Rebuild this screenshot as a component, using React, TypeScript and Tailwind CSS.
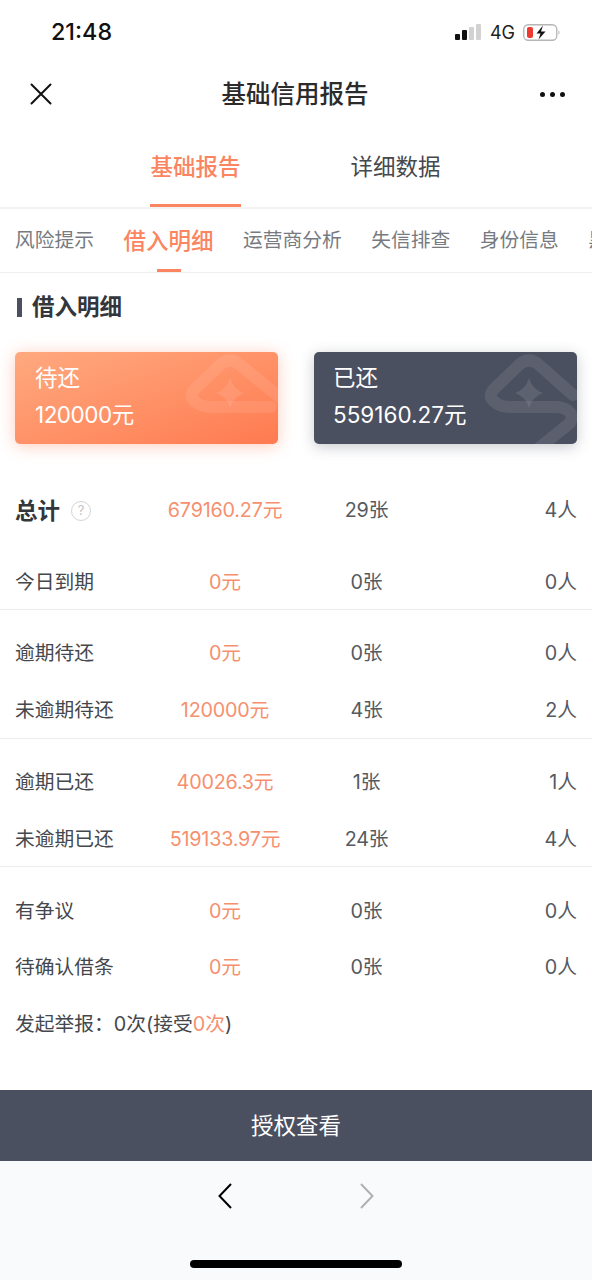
import React from "react";

const FONT = "font-['Inter','Noto_Sans_CJK_SC',sans-serif]";

interface Row {
  label: string;
  amount: string;
  cards: string;
  people: string;
}

const groups: { cls: string; rows: Row[] }[] = [
  {
    cls: "pt-[15px]",
    rows: [
      { label: "逾期待还", amount: "0元", cards: "0张", people: "0人" },
      { label: "未逾期待还", amount: "120000元", cards: "4张", people: "2人" },
    ],
  },
  {
    cls: "h-[127.6px] pt-[14px]",
    rows: [
      { label: "逾期已还", amount: "40026.3元", cards: "1张", people: "1人" },
      { label: "未逾期已还", amount: "519133.97元", cards: "24张", people: "4人" },
    ],
  },
];

const subTabs = ["风险提示", "借入明细", "运营商分析", "失信排查", "身份信息", "黑名单"];

function Watermark({ dark }: { dark?: boolean }) {
  return (
    <svg
      className="absolute inset-0 h-full w-full"
      viewBox="0 0 263 92"
      fill="none"
      stroke="white"
      strokeOpacity={dark ? 0.09 : 0.09}
      strokeWidth="12"
      strokeLinecap="round"
      strokeLinejoin="round"
    >
      <path
        d={
          dark
            ? "M259 43 L224 12 Q215 5 206 12 L180 37 Q173 45 181 50 Q186 55 196 55 H244 Q262 58 256 71 L220 100"
            : "M268 48 L224 12 Q215 5 206 12 L180 37 Q173 45 181 50 Q186 55 196 55 H256"
        }
      />
      <path
        d="M215 26 Q218 37 229 41 Q218 45 215 56 Q212 45 201 41 Q212 37 215 26 Z"
        fill="white"
        fillOpacity={0.1}
        stroke="none"
      />
    </svg>
  );
}

function DataRow({ row }: { row: Row }) {
  return (
    <div className="grid h-[56.8px] grid-cols-[120px_180px_104px_1fr] items-center px-[15px] pt-[2px] text-[19.75px] tracking-[-0.2px] text-[#555a60]">
      <div className="tracking-normal text-[#44474c]">{row.label}</div>
      <div className="text-center text-[#f6906f]">{row.amount}</div>
      <div className="pr-[1px] text-center">{row.cards}</div>
      <div className="text-right tracking-normal">{row.people}</div>
    </div>
  );
}

export default function App() {
  return (
    <div className={`flex h-[1280px] w-[592px] flex-col overflow-hidden bg-white ${FONT}`}>
      {/* status bar */}
      <div className="flex h-[64px] shrink-0 items-center justify-between pl-[51px] pr-[32px]">
        <span className="text-[23.3px] font-medium text-[#111]">21:48</span>
        <div className="flex items-center gap-[8px]">
          <svg width="27" height="16" viewBox="0 0 27 16">
            <rect x="0" y="10" width="5" height="6" rx="1" fill="#111" />
            <rect x="7" y="6" width="5" height="10" rx="1" fill="#111" />
            <rect x="14" y="3" width="5" height="13" rx="1" fill="#d2d2d2" />
            <rect x="21" y="0" width="5" height="16" rx="1" fill="#d2d2d2" />
          </svg>
          <span className="text-[18px] font-normal text-[#222]">4G</span>
          <svg width="37" height="17" viewBox="0 0 37 17">
            <rect x="0.75" y="0.75" width="33" height="15.5" rx="4.5" fill="none" stroke="#b5b5b5" strokeWidth="1.3" />
            <rect x="4" y="3" width="6" height="11" rx="2" fill="#ee3a30" />
            <path d="M35.5 6 Q37.5 8.5 35.5 11 Z" fill="#b5b5b5" />
            <path d="M20 1.5 L13.5 9.5 H17.5 L15.5 15.5 L22.5 7.5 H18 Z" fill="#111" />
          </svg>
        </div>
      </div>

      {/* nav */}
      <div className="flex h-[60px] shrink-0 items-center justify-between pl-[30px] pr-[27px]">
        <svg width="22" height="22" viewBox="0 0 22 22" stroke="#111" strokeWidth="2" strokeLinecap="round">
          <path d="M1.5 1.5 L20.5 20.5 M20.5 1.5 L1.5 20.5" />
        </svg>
        <span className="mr-[2px] text-[24.5px] font-medium text-[#2b2b2b]">基础信用报告</span>
        <div className="flex gap-[5px]">
          <span className="h-[5px] w-[5px] rounded-full bg-[#111]" />
          <span className="h-[5px] w-[5px] rounded-full bg-[#111]" />
          <span className="h-[5px] w-[5px] rounded-full bg-[#111]" />
        </div>
      </div>

      {/* main tabs */}
      <div className="flex h-[85px] shrink-0 justify-center gap-[110px] border-b-[2px] border-[#f2f2f2] pr-[1px] text-[22.5px]">
        <div className="flex items-center border-b-[3px] border-[#fb8560] pt-[5px] font-medium text-[#fb8560]">基础报告</div>
        <div className="flex items-center border-b-[3px] border-transparent pt-[5px] text-[#45484d]">详细数据</div>
      </div>

      {/* sub tabs */}
      <div className="flex h-[64px] shrink-0 items-center gap-[29.5px] overflow-hidden whitespace-nowrap border-b border-[#f0f0f0] pl-[15px]">
        {subTabs.map((t) =>
          t === "借入明细" ? (
            <div key={t} className="relative flex h-full items-center text-[22.5px] font-medium text-[#fb8560]">
              {t}
              <span className="absolute bottom-0 left-[33px] h-[3px] w-[24px] bg-[#fb8560]" />
            </div>
          ) : (
            <div key={t} className="text-[19.75px] text-[#777a7f]">
              {t}
            </div>
          )
        )}
      </div>

      {/* section title */}
      <div className="flex h-[68px] shrink-0 items-center gap-[10px] pl-[17px]">
        <span className="h-[19px] w-[5px] bg-[#4b5060]" />
        <span className="text-[22.5px] font-semibold text-[#33363a]">借入明细</span>
      </div>

      {/* summary cards */}
      <div className="flex shrink-0 justify-between px-[15px] pt-[11px]">
        <div className="relative h-[92px] w-[263px] overflow-hidden rounded-[5px] bg-gradient-to-br from-[#ffa97f] to-[#ff7a50] pl-[20px] pt-[9px] text-white shadow-[0_2px_16px_rgba(255,130,90,0.4)]">
          <Watermark />
          <div className="relative text-[22.5px] leading-[34px]">待还</div>
          <div className="relative mt-[3px] text-[22.5px] leading-[34px] tracking-[-0.5px]">120000元</div>
        </div>
        <div className="relative h-[92px] w-[263px] overflow-hidden rounded-[5px] bg-[#4b5060] pl-[19px] pt-[9px] text-white shadow-[0_3px_14px_rgba(75,80,96,0.3)]">
          <Watermark dark />
          <div className="relative text-[22.5px] leading-[34px]">已还</div>
          <div className="relative mt-[3px] text-[22.5px] leading-[34px]">559160.27元</div>
        </div>
      </div>

      {/* totals */}
      <div className="mt-[37px] grid h-[57px] shrink-0 grid-cols-[120px_180px_104px_1fr] items-center px-[15px] pt-[2px] text-[19.75px] tracking-[-0.2px] text-[#555a60]">
        <div className="flex items-center gap-[11px] text-[22.5px] font-semibold tracking-normal text-[#33363a]">
          总计
          <span className="flex h-[20px] w-[20px] items-center justify-center rounded-full border border-[#d4d4d4] text-[13px] font-normal text-[#c4c4c4]">?</span>
        </div>
        <div className="text-center text-[#f6906f]">679160.27元</div>
        <div className="pr-[1px] text-center">29张</div>
        <div className="text-right tracking-normal">4人</div>
      </div>

      <div className="mt-[15px] h-[56.8px] shrink-0 border-b border-[#ececec]">
        <DataRow row={{ label: "今日到期", amount: "0元", cards: "0张", people: "0人" }} />
      </div>

      {groups.map((g) => (
        <div key={g.rows[0].label} className={`shrink-0 border-b border-[#ececec] ${g.cls}`}>
          {g.rows.map((r) => (
            <DataRow key={r.label} row={r} />
          ))}
        </div>
      ))}

      <div className="shrink-0 pt-[15px]">
        <DataRow row={{ label: "有争议", amount: "0元", cards: "0张", people: "0人" }} />
        <DataRow row={{ label: "待确认借条", amount: "0元", cards: "0张", people: "0人" }} />
      </div>

      <div className="flex h-[57px] shrink-0 items-center pl-[15px] pt-[2px] text-[19.75px] text-[#44474c]">
        发起举报：0次(接受<span className="text-[#f6906f]">0次</span>)
      </div>

      <div className="flex-1" />

      {/* action button */}
      <div className="flex h-[71px] shrink-0 items-center justify-center bg-[#4b5060] text-[22.5px] text-white">授权查看</div>

      {/* browser toolbar */}
      <div className="relative h-[119px] shrink-0 bg-[#f9fafc]">
        <div className="flex justify-center gap-[128px] pt-[22px]">
          <svg width="14" height="26" viewBox="0 0 14 26" fill="none" stroke="#000" strokeWidth="2">
            <path d="M13 1 L1.5 13 L13 25" />
          </svg>
          <svg width="14" height="26" viewBox="0 0 14 26" fill="none" stroke="#b0b0b0" strokeWidth="2">
            <path d="M1 1 L12.5 13 L1 25" />
          </svg>
        </div>
        <div className="absolute bottom-[12px] left-[190px] h-[8px] w-[212px] rounded-full bg-black" />
      </div>
    </div>
  );
}
